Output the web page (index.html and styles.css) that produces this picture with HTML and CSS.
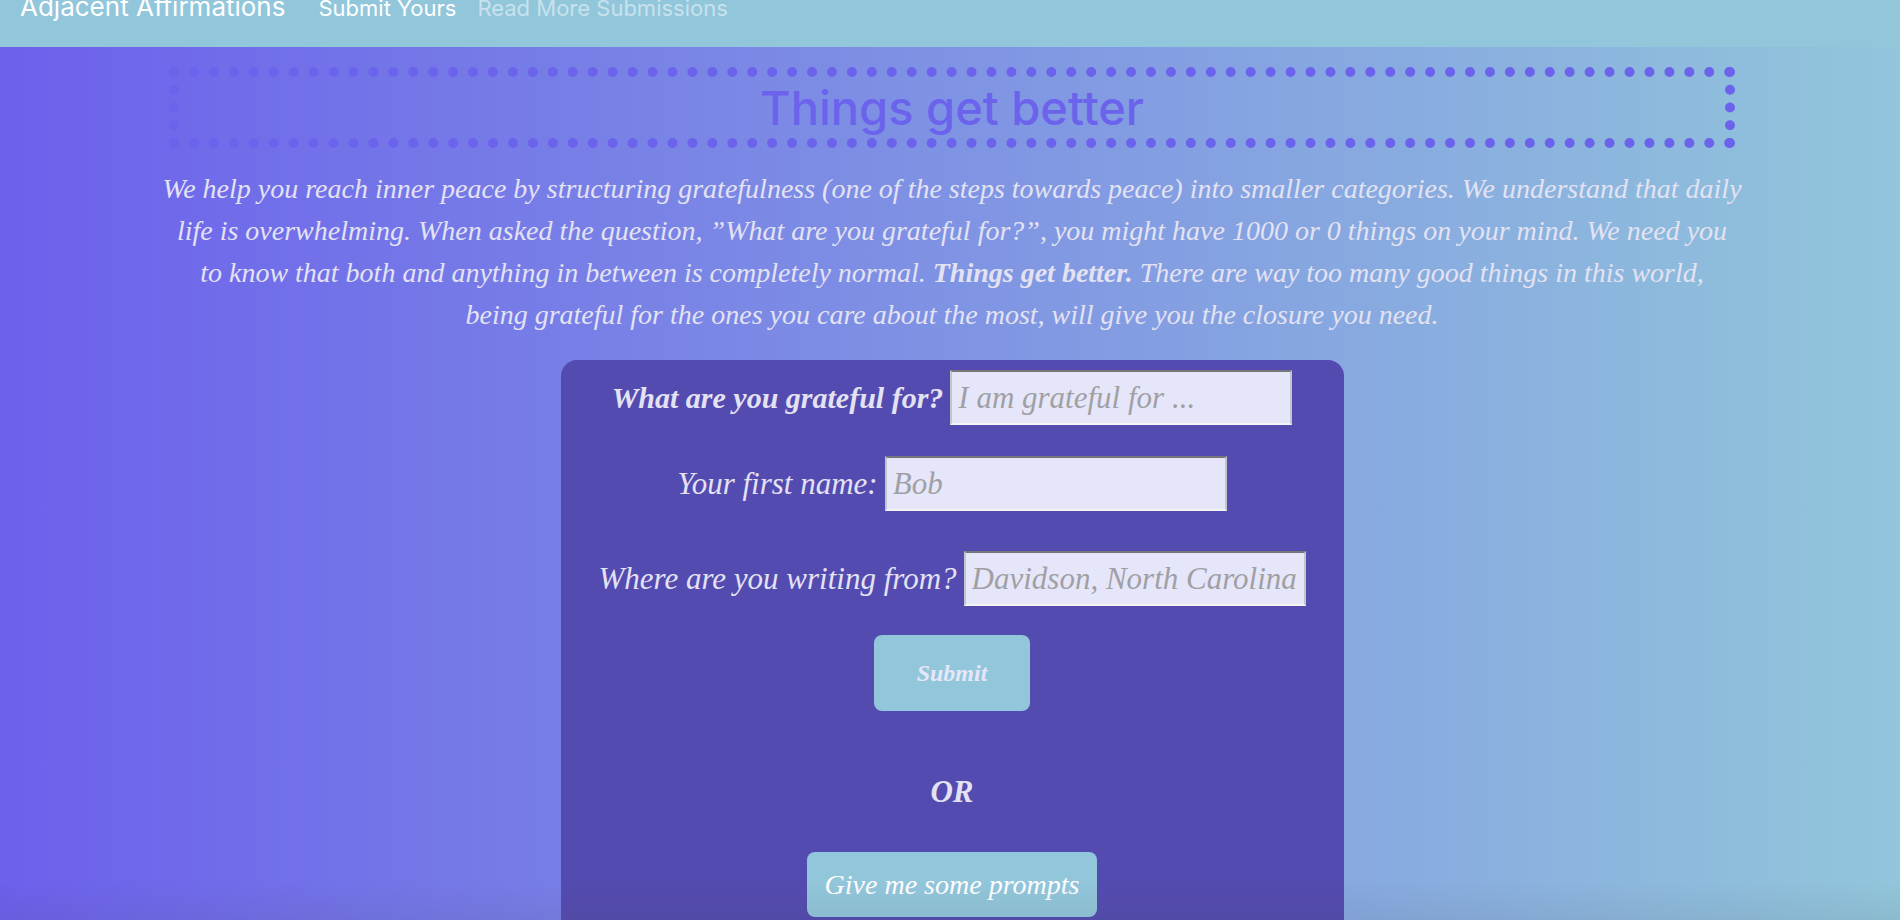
FILE: index.html
```html
<!DOCTYPE html>
<html lang="en">
<head>
<meta charset="utf-8">
<title>Adjacent Affirmations</title>
<link rel="stylesheet" href="styles.css">
</head>
<body>
<div class="page">
  <nav class="navbar">
    <a class="brand" href="#">Adjacent Affirmations</a>
    <a class="nav-link active" href="#">Submit Yours</a>
    <a class="nav-link" href="#">Read More Submissions</a>
  </nav>
  <main class="content">
    <h1 class="title">Things get better</h1>
    <p class="intro">We help you reach inner peace by structuring gratefulness (one of the steps towards peace) into smaller categories. We understand that daily<br>
      life is overwhelming. When asked the question, ”What are you grateful for?”, you might have 1000 or 0 things on your mind. We need you<br>
      to know that both and anything in between is completely normal. <strong>Things get better.</strong> There are way too many good things in this world,<br>
      being grateful for the ones you care about the most, will give you the closure you need.</p>
    <form class="card">
      <div class="field">
        <label class="strong" for="grateful">What are you grateful for?</label>
        <input id="grateful" type="text" placeholder="I am grateful for ...">
      </div>
      <div class="field">
        <label for="name">Your first name:</label>
        <input id="name" type="text" placeholder="Bob">
      </div>
      <div class="field field-place">
        <label for="place">Where are you writing from?</label>
        <input id="place" type="text" placeholder="Davidson, North Carolina">
      </div>
      <button class="btn submit" type="submit">Submit</button>
      <p class="or">OR</p>
      <button class="btn prompts" type="button">Give me some prompts</button>
    </form>
  </main>
</div>
</body>
</html>
```
FILE: styles.css
```css
* {
  box-sizing: border-box;
}

body {
  margin: 0;
  font-family: Inter, "Liberation Sans", sans-serif;
}

.page {
  position: relative;
  height: 100vh;
  overflow: hidden;
  background: linear-gradient(to right, #6c60ec, #92c6db);
}

.page::after {
  content: "";
  position: absolute;
  left: 0;
  right: 0;
  bottom: 0;
  height: 40px;
  background: linear-gradient(to bottom, transparent, rgba(60, 60, 60, 0.08));
  pointer-events: none;
}

.navbar {
  display: flex;
  align-items: baseline;
  margin-top: -32px;
  padding: 23px 20px 23px;
  line-height: 32px;
  background: #92c6db;
}

.brand {
  margin-right: 33px;
  font-size: 26px;
  color: #fff;
  text-decoration: none;
}

.nav-link {
  margin-right: 21px;
  font-size: 22px;
  color: rgba(255, 255, 255, 0.5);
  text-decoration: none;
}

.nav-link.active {
  color: #fff;
}

.content {
  padding: 20px 165px 0 169px;
  font-family: "Apple Chancery", "Liberation Serif", serif;
  font-style: italic;
  color: #e3e2f2;
  text-align: center;
}

.title {
  margin: 0 0 20px;
  border: 10px dotted #6c63ec;
  font: 500 47px/61px Inter, "Liberation Sans", sans-serif;
  color: #6c63ec;
}

.intro {
  margin: 0 -10px 24px;
  font-size: 28px;
  line-height: 42px;
  white-space: nowrap;
}

.card {
  display: flex;
  flex-direction: column;
  align-items: center;
  width: 50%;
  min-height: 700px;
  margin: 0 auto;
  padding-top: 10px;
  border-radius: 16px;
  background: #544bb0;
  font-size: 31px;
}

.field {
  display: flex;
  align-items: center;
  gap: 7px;
  margin-bottom: 31px;
}

.field-place {
  margin: 9px 0 29px;
}

.strong {
  font-size: 30px;
  font-weight: bold;
}

.field input {
  width: 342px;
  height: 55px;
  padding: 0 6px;
  border: 2px solid;
  border-color: #77757c #c4c4cc #f4f4f4 #c4c4cc;
  background: #e6e6fa;
  font: inherit;
  color: #333;
}

.field input::placeholder {
  color: #a0a0a4;
  opacity: 1;
}

.btn {
  border: 0;
  border-radius: 8px;
  background: #92c6db;
  font: inherit;
}

.submit {
  padding: 20px 43px;
  font-size: 24px;
  font-weight: bold;
  line-height: 36px;
  color: #e6e6fa;
}

.or {
  margin: 60px 0 39px;
  font-weight: bold;
  line-height: 42px;
}

.prompts {
  padding: 12px 18px;
  font-size: 28px;
  line-height: 41px;
  color: #fff;
}
```
